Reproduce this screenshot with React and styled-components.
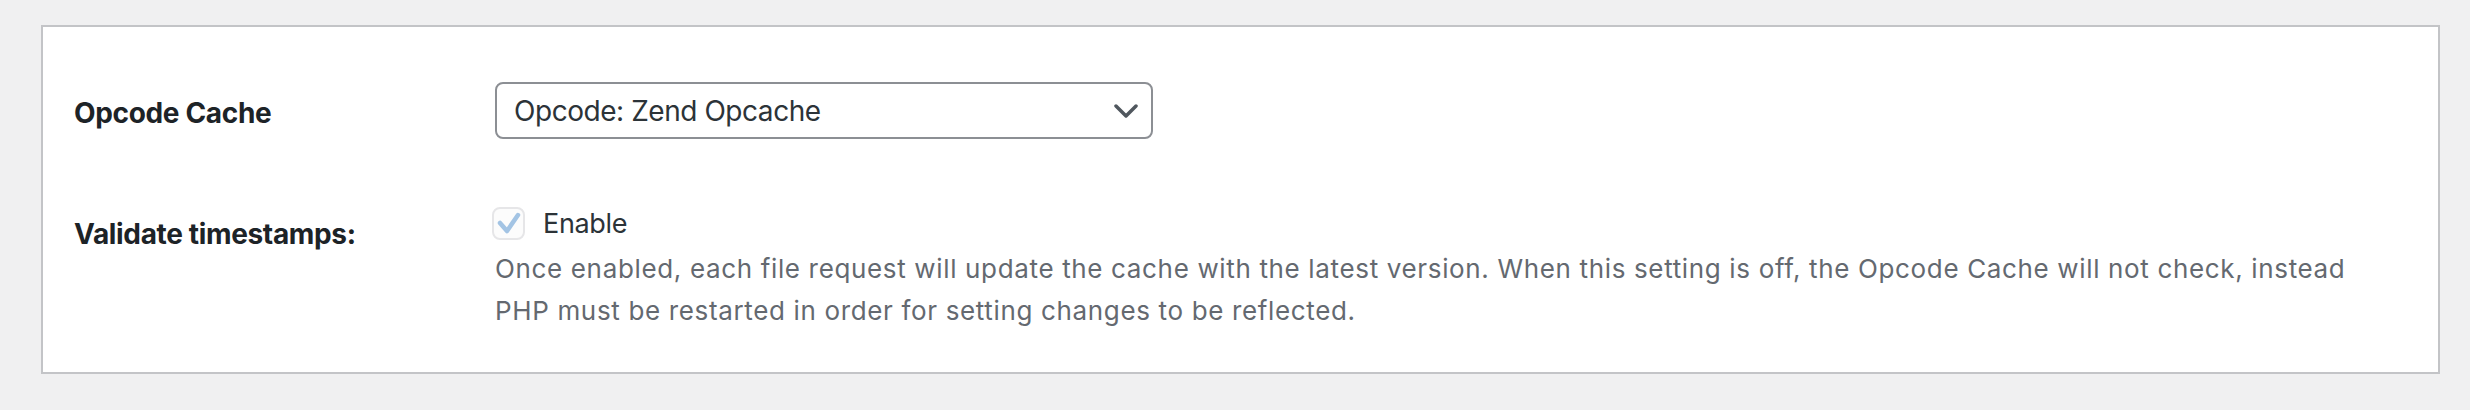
import React from "react";
import styled, { createGlobalStyle } from "styled-components";

const GlobalStyle = createGlobalStyle`
  html, body {
    margin: 0;
    padding: 0;
    background: #f0f0f1;
  }
  body {
    font-family: Inter, "Noto Sans", "Liberation Sans", sans-serif;
    color: #1d2327;
  }
`;

const Page = styled.div`
  padding: 25px 30px 0 41px;
`;

const Card = styled.div`
  background: #fff;
  border: 2px solid #c3c4c7;
  padding: 27px 31px 12px;
  display: grid;
  grid-template-columns: 421px 1fr;
  align-items: start;
`;

const Label = styled.div`
  font-size: 28px;
  line-height: 36px;
  font-weight: 700;
  letter-spacing: -0.34px;
  color: #1d2327;
  padding: 41px 0 44px;
`;

const Field = styled.div`
  padding: 28px 0;
`;

const SelectWrap = styled.div`
  position: relative;
  width: 658px;
`;

const Select = styled.select`
  appearance: none;
  -webkit-appearance: none;
  width: 100%;
  height: 57px;
  box-sizing: border-box;
  border: 2px solid #8c8f94;
  border-radius: 8px;
  background: #fff;
  color: #2c3338;
  font-family: Inter, "Noto Sans", "Liberation Sans", sans-serif;
  font-size: 28px;
  letter-spacing: -0.45px;
  padding: 0 60px 0 17px;
  margin: 0;
  outline: none;
`;

const Chevron = styled.svg`
  position: absolute;
  right: 15px;
  top: 22px;
  pointer-events: none;
`;

const CheckLine = styled.label`
  display: flex;
  align-items: center;
  height: 40px;
  font-size: 27px;
  letter-spacing: -0.35px;
  color: #2c3338;
  gap: 18px;
`;

const CheckBox = styled.span`
  width: 33px;
  height: 33px;
  box-sizing: border-box;
  border: 2px solid #e6e6e8;
  border-radius: 8px;
  background: #fcfcfc;
  display: flex;
  align-items: center;
  justify-content: center;
  margin-left: -3px;
`;

const Description = styled.p`
  margin: 5px 0 0;
  font-size: 26px;
  line-height: 42px;
  letter-spacing: 0.65px;
  color: #646970;
`;

export default function App() {
  return (
    <>
      <GlobalStyle />
      <Page>
        <Card>
          <Label>Opcode Cache</Label>
          <Field>
            <SelectWrap>
              <Select defaultValue="zend">
                <option value="zend">Opcode: Zend Opcache</option>
              </Select>
              <Chevron width="24" height="14" viewBox="0 0 24 14">
                <polyline
                  points="2,2 12,12 22,2"
                  fill="none"
                  stroke="#50575e"
                  strokeWidth="3.5"
                  strokeLinecap="round"
                  strokeLinejoin="round"
                />
              </Chevron>
            </SelectWrap>
          </Field>
          <Label>Validate timestamps:</Label>
          <Field>
            <CheckLine>
              <CheckBox>
                <svg width="24" height="22" viewBox="0 0 24 22">
                  <polyline
                    points="3,11 10,19 21,3"
                    fill="none"
                    stroke="#a3c4e4"
                    strokeWidth="4.5"
                    strokeLinecap="round"
                    strokeLinejoin="round"
                  />
                </svg>
              </CheckBox>
              Enable
            </CheckLine>
            <Description>
              Once enabled, each file request will update the cache with the latest version. When this setting is off, the Opcode Cache will not check, instead
              <br />
              PHP must be restarted in order for setting changes to be reflected.
            </Description>
          </Field>
        </Card>
      </Page>
    </>
  );
}
